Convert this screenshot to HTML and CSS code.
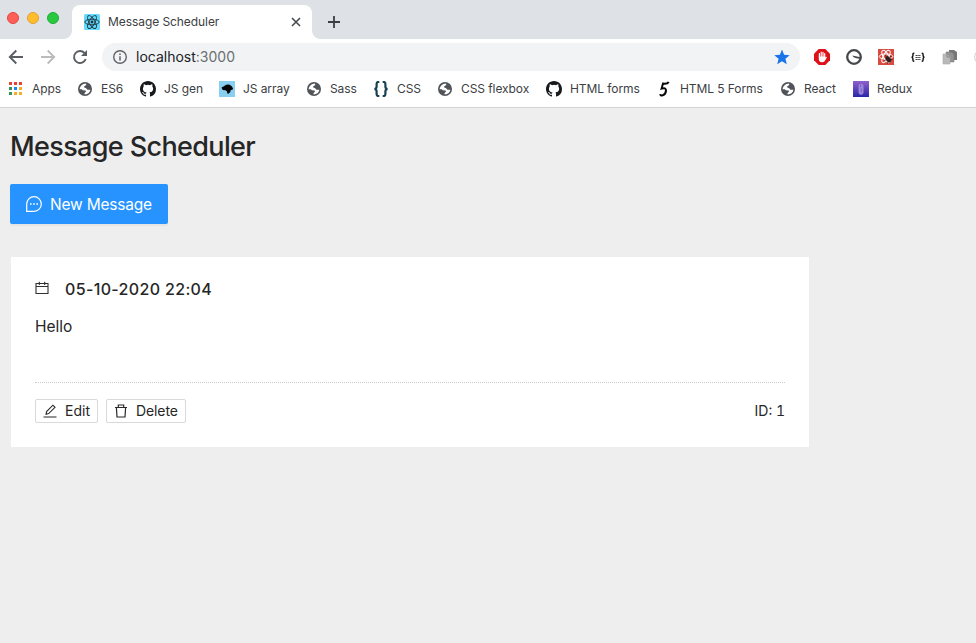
FILE: index.html
```
<!DOCTYPE html>
<html lang="en">
<head>
<meta charset="utf-8">
<title>Message Scheduler</title>
<link rel="stylesheet" href="styles.css">
</head>
<body>
<svg class="defs" width="0" height="0" aria-hidden="true">
  <symbol id="globe" viewBox="0 0 16 16"><circle cx="8" cy="8" r="7" fill="#505357"/><path d="M2.600 8.200C3 5 5.600 2.800 8.800 2.600L9.400 3.900L7.200 5.300L7.300 6.500L9.200 7.200L10.400 8.700L13.400 8.700C13 11.500 10.500 13.500 7.600 13.400L7.500 11.900L9 10.800L8.600 9.500L5.800 9.300L4.800 8.200Z" fill="#fff"/></symbol>
  <symbol id="github" viewBox="0 0 16 16"><path fill="#17191c" fill-rule="evenodd" d="M8 0C3.580 0 0 3.580 0 8c0 3.540 2.290 6.530 5.470 7.590.4.070.55-.17.55-.38 0-.19-.01-.82-.01-1.490-2.010.37-2.530-.49-2.690-.94-.09-.23-.48-.94-.82-1.130-.28-.15-.68-.52-.01-.53.63-.01 1.080.58 1.230.82.72 1.210 1.870.87 2.330.66.07-.52.28-.87.51-1.070-1.780-.2-3.640-.89-3.640-3.950 0-.87.31-1.590.82-2.150-.08-.2-.36-1.020.08-2.120 0 0 .67-.21 2.200.82a7.600 7.600 0 0 1 4 0c1.530-1.040 2.200-.82 2.200-.82.44 1.100.16 1.920.08 2.120.51.56.82 1.270.82 2.150 0 3.070-1.870 3.750-3.650 3.950.29.25.54.73.54 1.480 0 1.070-.01 1.930-.01 2.200 0 .21.15.46.55.38A8 8 0 0 0 16 8c0-4.420-3.580-8-8-8Z"/></symbol>
</svg>
<header class="browser">
  <div class="tabstrip">
    <div class="lights"><i class="red"></i><i class="yellow"></i><i class="green"></i></div>
    <div class="tab">
      <svg width="16" height="16" viewBox="0 0 16 16"><rect width="16" height="16" rx="1.500" fill="#61dafb"/><g fill="none" stroke="#20343d" stroke-width=".9"><ellipse cx="8" cy="8" rx="7.200" ry="2.800"/><ellipse cx="8" cy="8" rx="7.200" ry="2.800" transform="rotate(60 8 8)"/><ellipse cx="8" cy="8" rx="7.200" ry="2.800" transform="rotate(120 8 8)"/></g><circle cx="8" cy="8" r="1.400" fill="#20343d"/></svg>
      <span class="tab-title">Message Scheduler</span>
      <svg class="close" width="10" height="10" viewBox="0 0 10 10"><path d="M1 1L9 9M9 1L1 9" stroke="#45484c" stroke-width="1.600"/></svg>
    </div>
    <svg class="plus" width="12" height="12" viewBox="0 0 12 12"><path d="M6 0V12M0 6H12" stroke="#3c4043" stroke-width="1.800"/></svg>
  </div>
  <div class="toolbar">
    <svg width="16" height="16" viewBox="0 0 16 16"><path d="M15 8H2M8.300 1.500L1.800 8L8.300 14.500" fill="none" stroke="#5a5d61" stroke-width="1.900"/></svg>
    <svg width="16" height="16" viewBox="0 0 16 16"><path d="M1 8H14M7.700 1.500L14.200 8L7.700 14.500" fill="none" stroke="#babcbe" stroke-width="1.900"/></svg>
    <svg width="16" height="16" viewBox="0 0 16 16"><path d="M13.700 10A6 6 0 1 1 12.500 4" fill="none" stroke="#5a5d61" stroke-width="1.900"/><path d="M15 1V7H9Z" fill="#5a5d61"/></svg>
    <div class="address">
      <svg width="16" height="16" viewBox="0 0 16 16"><circle cx="8" cy="8" r="6.300" fill="none" stroke="#5f6368" stroke-width="1.400"/><path d="M8 7.200V11.500M8 4.400V6" stroke="#5f6368" stroke-width="1.500"/></svg>
      <span class="url">localhost<span class="port">:3000</span></span>
      <svg class="star" width="16" height="16" viewBox="0 0 16 16"><path d="M8 .5L10.100 5.800L15.700 6.200L11.400 9.800L12.800 15.300L8 12.300L3.200 15.300L4.600 9.800L.3 6.200L5.900 5.800Z" fill="#1a73e8"/></svg>
    </div>
    <div class="extensions">
      <svg width="16" height="16" viewBox="0 0 16 16"><path d="M4.700 0H11.300L16 4.700V11.300L11.300 16H4.700L0 11.300V4.700Z" fill="#e01019"/><path d="M5.400 8V4.600M7.200 7.500V3.200M9 7.500V3.300M10.700 9V4.600" stroke="#fff" stroke-width="1.200" stroke-linecap="round"/><path d="M4.800 7.600H11.300V8.800L12.300 7.800L12.900 8.400L10.600 12.200Q9.500 13.300 7.800 13.200Q4.800 13 4.800 10Z" fill="#fff"/></svg>
      <svg width="16" height="16" viewBox="0 0 16 16"><circle cx="8" cy="8" r="6.800" fill="#fff" stroke="#45484b" stroke-width="2.300"/><path d="M6.300 6.600L14.500 8.200V10L9.500 9Q7 8.300 6.300 6.600Z" fill="#45484b"/></svg>
      <svg width="16" height="16" viewBox="0 0 16 16"><rect width="16" height="16" fill="#d94b41"/><g fill="none" stroke="#fff" stroke-width="1"><ellipse cx="8" cy="7.500" rx="6.800" ry="2.600"/><ellipse cx="8" cy="7.500" rx="6.800" ry="2.600" transform="rotate(60 8 7.500)"/><ellipse cx="8" cy="7.500" rx="6.800" ry="2.600" transform="rotate(120 8 7.500)"/></g><ellipse cx="10.300" cy="10.200" rx="2.300" ry="3.500" transform="rotate(-40 10.300 10.200)" fill="#301f1e"/><path d="M6.800 6.200L8.500 7.800M12 7.500L13.800 7M8 10.500L6.500 12M10 13L9.500 14.500M12.800 10L14.500 10.500" stroke="#301f1e" stroke-width=".9"/></svg>
      <svg width="16" height="16" viewBox="0 0 16 16"><path d="M4.300 4.200H4Q2.900 4.200 2.900 5.400V6.700Q2.900 8 1.600 8.200Q2.900 8.400 2.900 9.700V11Q2.900 12.200 4 12.200H4.300M11.700 4.200H12Q13.100 4.200 13.100 5.400V6.700Q13.100 8 14.400 8.200Q13.100 8.400 13.100 9.700V11Q13.100 12.200 12 12.200H11.700" fill="none" stroke="#111" stroke-width="1.400"/><path d="M5.500 6.500H10.500M5.500 8.500H10.500M5.500 10.500H10.500" stroke="#333" stroke-width=".9" stroke-dasharray="1.500 .3"/></svg>
      <svg width="16" height="16" viewBox="0 0 16 16"><path d="M7 1H12L15 3V11H7Z" fill="#777"/><path d="M4 3H9L12 5V13H4Z" fill="#929292" stroke="#777" stroke-width=".5"/><path d="M1 5H5L8 8V15H1Z" fill="#b9b9b9" stroke="#aaa" stroke-width=".6"/><path d="M5 5V8H8" fill="none" stroke="#888"/></svg>
      <svg width="16" height="16" viewBox="0 0 16 16"><circle cx="8" cy="8" r="7.300" fill="none" stroke="#dadada" stroke-width="1.300"/></svg>
    </div>
  </div>
  <nav class="bookmarks">
    <a><svg width="16" height="16" viewBox="0 0 16 16"><path d="M1 1h3v3H1zM6 1h3v3H6zM11 1h3v3h-3z" fill="#e94235"/><path d="M1 6h3v3H1zM1 11h3v3H1z" fill="#34945a"/><path d="M6 6h3v3H6z" fill="#1a86f5"/><path d="M11 6h3v3h-3zM11 11h3v3h-3zM6 11h3v3H6z" fill="#f5ad29"/></svg><span>Apps</span></a>
    <a><svg width="16" height="16"><use href="#globe"/></svg><span>ES6</span></a>
    <a><svg width="16" height="16"><use href="#github"/></svg><span>JS gen</span></a>
    <a><svg width="16" height="16" viewBox="0 0 16 16"><path fill="#88cff0" d="M0 0h16v16H0z"/><path d="M2.500 6.500L5 5.200L7 3.700L10 3.600L12.500 5L14 7.200L13.500 8.800L11.800 9L11.300 11L9.800 12.600L8.200 12.600L8 10.500L6.500 9.200L3.700 8.900Z" fill="#050505"/></svg><span>JS array</span></a>
    <a><svg width="16" height="16"><use href="#globe"/></svg><span>Sass</span></a>
    <a><svg width="16" height="16" viewBox="0 0 16 16"><path d="M6.300 1H5.300Q3.600 1 3.600 3V5.700Q3.600 7.700 1.500 8Q3.600 8.300 3.600 10.300V13Q3.600 15 5.300 15H6.300M9.700 1H10.700Q12.400 1 12.400 3V5.700Q12.400 7.700 14.500 8Q12.400 8.300 12.400 10.300V13Q12.400 15 10.700 15H9.700" fill="none" stroke="#174050" stroke-width="2.200"/></svg><span>CSS</span></a>
    <a><svg width="16" height="16"><use href="#globe"/></svg><span>CSS flexbox</span></a>
    <a><svg width="16" height="16"><use href="#github"/></svg><span>HTML forms</span></a>
    <a><svg width="16" height="16" viewBox="0 0 16 16"><path d="M12.600 .8Q11.500 3.200 7 2.600L5.600 7.600Q9.900 6.200 10 9.600Q9.900 13 6.600 14.400Q4.500 15 4.200 13.200" fill="none" stroke="#080808" stroke-width="2"/></svg><span>HTML 5 Forms</span></a>
    <a><svg width="16" height="16"><use href="#globe"/></svg><span>React</span></a>
    <a><svg width="16" height="16" viewBox="0 0 16 16"><defs><linearGradient id="violet" x2="0" y2="1"><stop stop-color="#9360cb"/><stop offset="1" stop-color="#2826a8"/></linearGradient></defs><path fill="url(#violet)" d="M0 0h16v16H0z"/><rect x="5.900" y="3" width="4.300" height="10.500" rx="2.100" fill="#9c85da" stroke="#a993de" stroke-width=".5"/><path d="M7.600 3.500V6M8.300 7.500V11.500" stroke="#6c50b8" stroke-width=".7"/></svg><span>Redux</span></a>
  </nav>
</header>
<main class="page">
  <h1>Message Scheduler</h1>
  <button class="primary">
    <svg width="16" height="16" viewBox="0 0 16 16" fill="none" stroke="#fff"><path d="M.7 15.300V8A7.300 7.300 0 1 1 8 15.300Z" stroke-width="1.200"/><path d="M4 8h1.600M7.200 8h1.600M10.400 8H12" stroke-width="1.600"/></svg>
    <span>New Message</span>
  </button>
  <article class="card">
    <div class="date">
      <svg width="14" height="14" viewBox="0 0 14 14" fill="none" stroke="#303030"><path d="M1 2.500H13V12.500H1ZM1 5.500H13M4.300 .7V4M9.700 .7V4" stroke-width="1.100"/></svg>
      <span>05-10-2020 22:04</span>
    </div>
    <p class="message">Hello</p>
    <footer>
      <button class="small edit"><svg width="14" height="14" viewBox="0 0 14 14" fill="none" stroke="#292929" stroke-width="1.100"><path d="M.5 13H13.500M3.100 10.200L3.600 7.500L9.900 1.200L12 3.300L5.700 9.600Z"/></svg><span>Edit</span></button>
      <button class="small delete"><svg width="14" height="14" viewBox="0 0 14 14" fill="none" stroke="#292929" stroke-width="1.200"><path d="M1 3.500H13M4.300 3.500V1H9.700V3.500M2.400 3.500L3 13H11L11.600 3.500"/></svg><span>Delete</span></button>
      <span class="id">ID: 1</span>
    </footer>
  </article>
</main>
</body>
</html>
```
FILE: styles.css
```
* { box-sizing: border-box; }
body { margin: 0; height: 643px; overflow: hidden; background: #eee; color: #262626; font-family: Inter, "Liberation Sans", sans-serif; }
svg { display: block; flex: none; }
.defs { display: none; }
.browser { height: 108px; background: #fff; border-bottom: 1px solid #d2d3d4; overflow: hidden; }
.tabstrip { display: flex; height: 39px; background: #dee1e6; }
.lights { display: flex; gap: 8px; width: 72px; padding: 12px 0 0 7px; }
.lights i { width: 12px; height: 12px; border-radius: 50%; border: 1px solid #e2463f; background: #ff5f57; }
.lights .yellow { background: #ffbd2e; border-color: #e1a032; }
.lights .green { background: #28c940; border-color: #20ad33; }
.tab { position: relative; display: flex; align-items: center; width: 240px; height: 34px; margin-top: 5px; padding: 0 11px 0 12px; background: #fff; border-radius: 8px 8px 0 0; }
.tab::before, .tab::after { content: ""; position: absolute; bottom: 0; width: 8px; height: 8px; }
.tab::before { right: 100%; background: radial-gradient(circle at 0 0, #dee1e6 7.500px, #fff 8px); }
.tab::after { left: 100%; background: radial-gradient(circle at 100% 0, #dee1e6 7.500px, #fff 8px); }
.tab-title { margin-left: 8px; padding-bottom: 2px; font-size: 12px; letter-spacing: -.07px; color: #3c4043; }
.close { margin-left: auto; }
.plus { margin: 16px 0 0 16px; }
.toolbar { display: flex; align-items: center; height: 36px; padding-left: 8px; gap: 16px; }
.address { display: flex; align-items: center; flex: none; width: 698px; height: 28px; margin-left: -2px; padding: 0 10px; border-radius: 14px; background: #f1f3f4; }
.url { margin-left: 8px; padding-bottom: 1px; color: #202124; font-size: 14px; }
.port { color: #6b6f73; }
.star { margin-left: auto; }
.extensions { display: flex; gap: 16px; margin-left: -2px; }
.bookmarks { display: grid; grid-template-columns: 69px 63px 79px 87px 67px 64px 109px 110px 124px 73px auto; height: 28px; padding-left: 8px; align-items: center; }
.bookmarks a { display: flex; align-items: center; gap: 8px; height: 28px; color: #3c4043; font-size: 12px; letter-spacing: -.08px; white-space: nowrap; }
.bookmarks span { padding-bottom: 2px; }
.page { padding: 22px 10px; }
h1 { margin: 0; height: 34px; font-size: 27px; line-height: 34px; font-weight: 500; letter-spacing: -.63px; }
button { font-family: inherit; }
.primary { display: flex; align-items: center; gap: 8px; width: 158px; height: 40px; margin: 20px 0 33px; padding: 0 16px; border: 0; border-radius: 2px; background: #2693ff; box-shadow: 0 2px 0 rgba(0,0,0,.04); color: #fff; font-size: 15.5px; letter-spacing: -.2px; white-space: nowrap; }
.card { width: 798px; height: 190px; margin-left: 1px; padding: 20px 24px; background: #fff; }
.date { display: flex; gap: 16px; height: 24px; font-size: 16px; line-height: 24px; font-weight: 500; letter-spacing: .35px; }
.date svg { margin-top: 4px; }
.message { margin: 14px 0 0; height: 24px; font-size: 15.5px; line-height: 24px; }
.card footer { display: flex; align-items: center; gap: 8px; margin-top: 43px; padding-top: 16px; border-top: 1px dotted #ccc; font-size: 14px; }
.small { display: flex; align-items: center; gap: 8px; height: 24px; padding: 0 7px; border: 1px solid #d9d9d9; border-radius: 2px; background: #fff; color: #262626; font-size: 14px; white-space: nowrap; }
.small span, .id { padding-bottom: 1px; }
.edit { width: 63px; }
.delete { width: 80px; letter-spacing: -.1px; }
.id { margin-left: auto; font-variant-numeric: tabular-nums; }
```
